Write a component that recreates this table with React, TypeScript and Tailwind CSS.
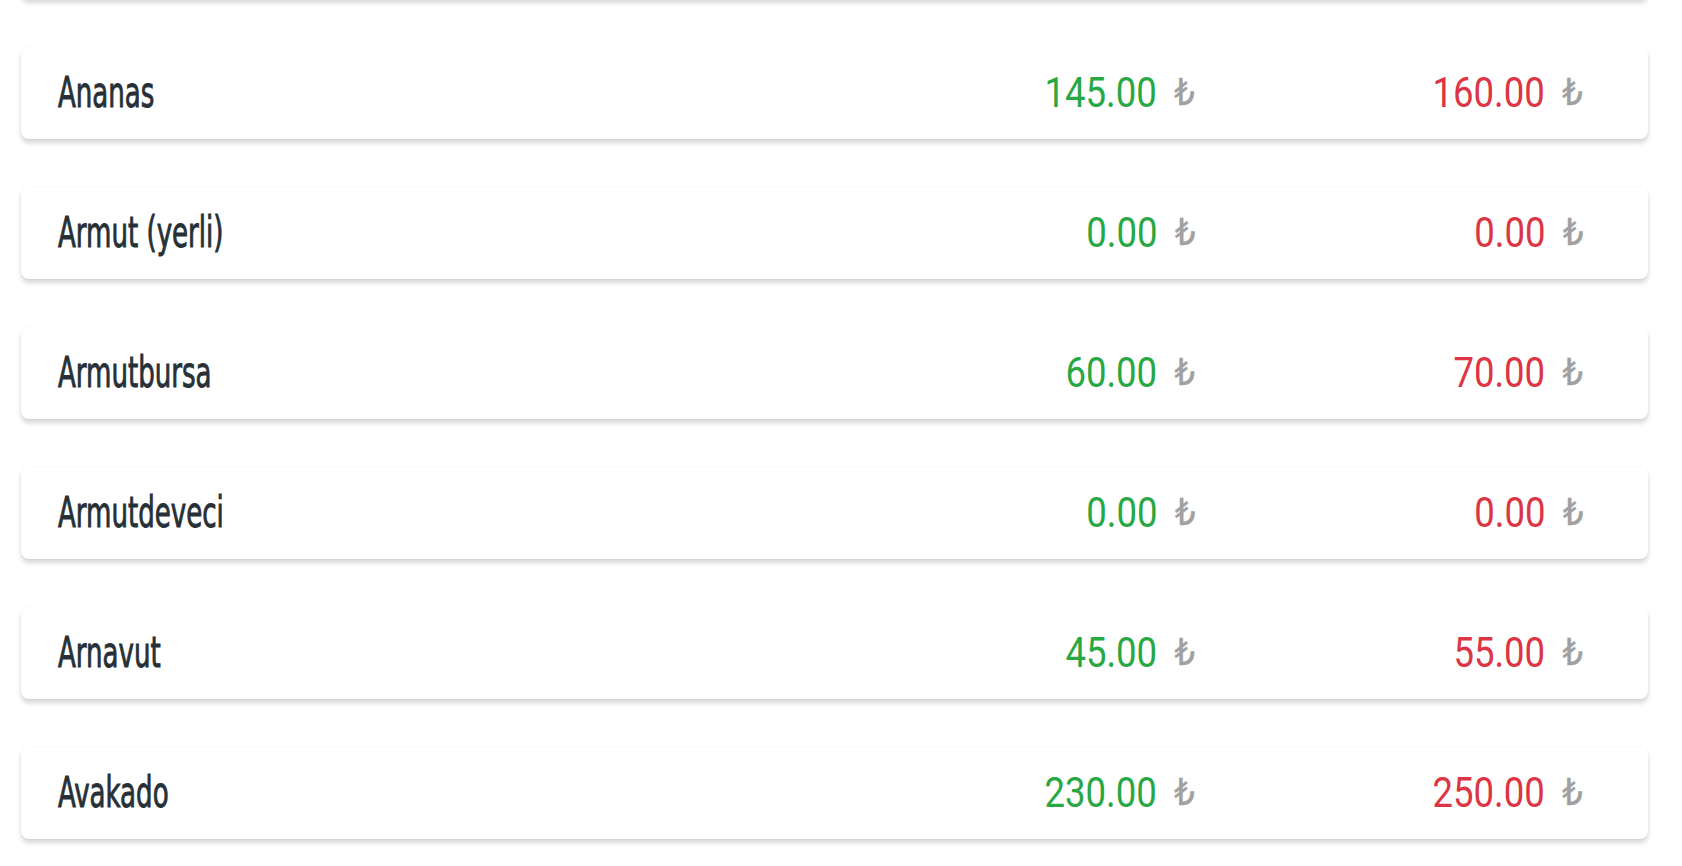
const items = [
  { name: "", buy: "", sell: "" },
  { name: "Ananas", buy: "145.00", sell: "160.00" },
  { name: "Armut (yerli)", buy: "0.00", sell: "0.00" },
  { name: "Armutbursa", buy: "60.00", sell: "70.00" },
  { name: "Armutdeveci", buy: "0.00", sell: "0.00" },
  { name: "Arnavut", buy: "45.00", sell: "55.00" },
  { name: "Avakado", buy: "230.00", sell: "250.00" },
];

function Price({ value, color }: { value: string; color: string }) {
  if (!value) return null;
  return (
    <span className="inline-flex origin-right scale-x-[0.87] items-baseline whitespace-nowrap leading-none">
      <span className={`font-['Roboto',sans-serif] text-[42px] ${color}`}>{value}</span>
      <span className="relative -top-[2px] ml-[20px] font-['DejaVu_Sans',sans-serif] text-[37px] text-[#a0a0a0] [-webkit-text-stroke:0.4px_#a0a0a0]">
        ₺
      </span>
    </span>
  );
}

export default function App() {
  return (
    <div className="h-[866px] w-[1682px] overflow-hidden bg-white">
      <div className="-mt-[93px] flex flex-col gap-[48px] pl-[21px]">
        {items.map((item, i) => (
          <div
            key={i}
            className="flex h-[92px] w-[1627px] items-center rounded-[8px] bg-white pl-[37px] pr-[65px] shadow-[0_4px_5px_rgba(0,0,0,0.16),0_0_2px_rgba(0,0,0,0.05)]"
          >
            <div className="flex-1">
              <span className="inline-block origin-left scale-x-[0.69] whitespace-nowrap font-['DejaVu_Sans_Condensed','DejaVu_Sans',sans-serif] text-[42px] leading-none text-[#263036] [-webkit-text-stroke:0.9px_#263036]">
                {item.name}
              </span>
            </div>
            <div className="flex w-[300px] justify-end">
              <Price value={item.buy} color="text-[#28a745]" />
            </div>
            <div className="flex w-[388px] justify-end">
              <Price value={item.sell} color="text-[#dc3545]" />
            </div>
          </div>
        ))}
      </div>
    </div>
  );
}
